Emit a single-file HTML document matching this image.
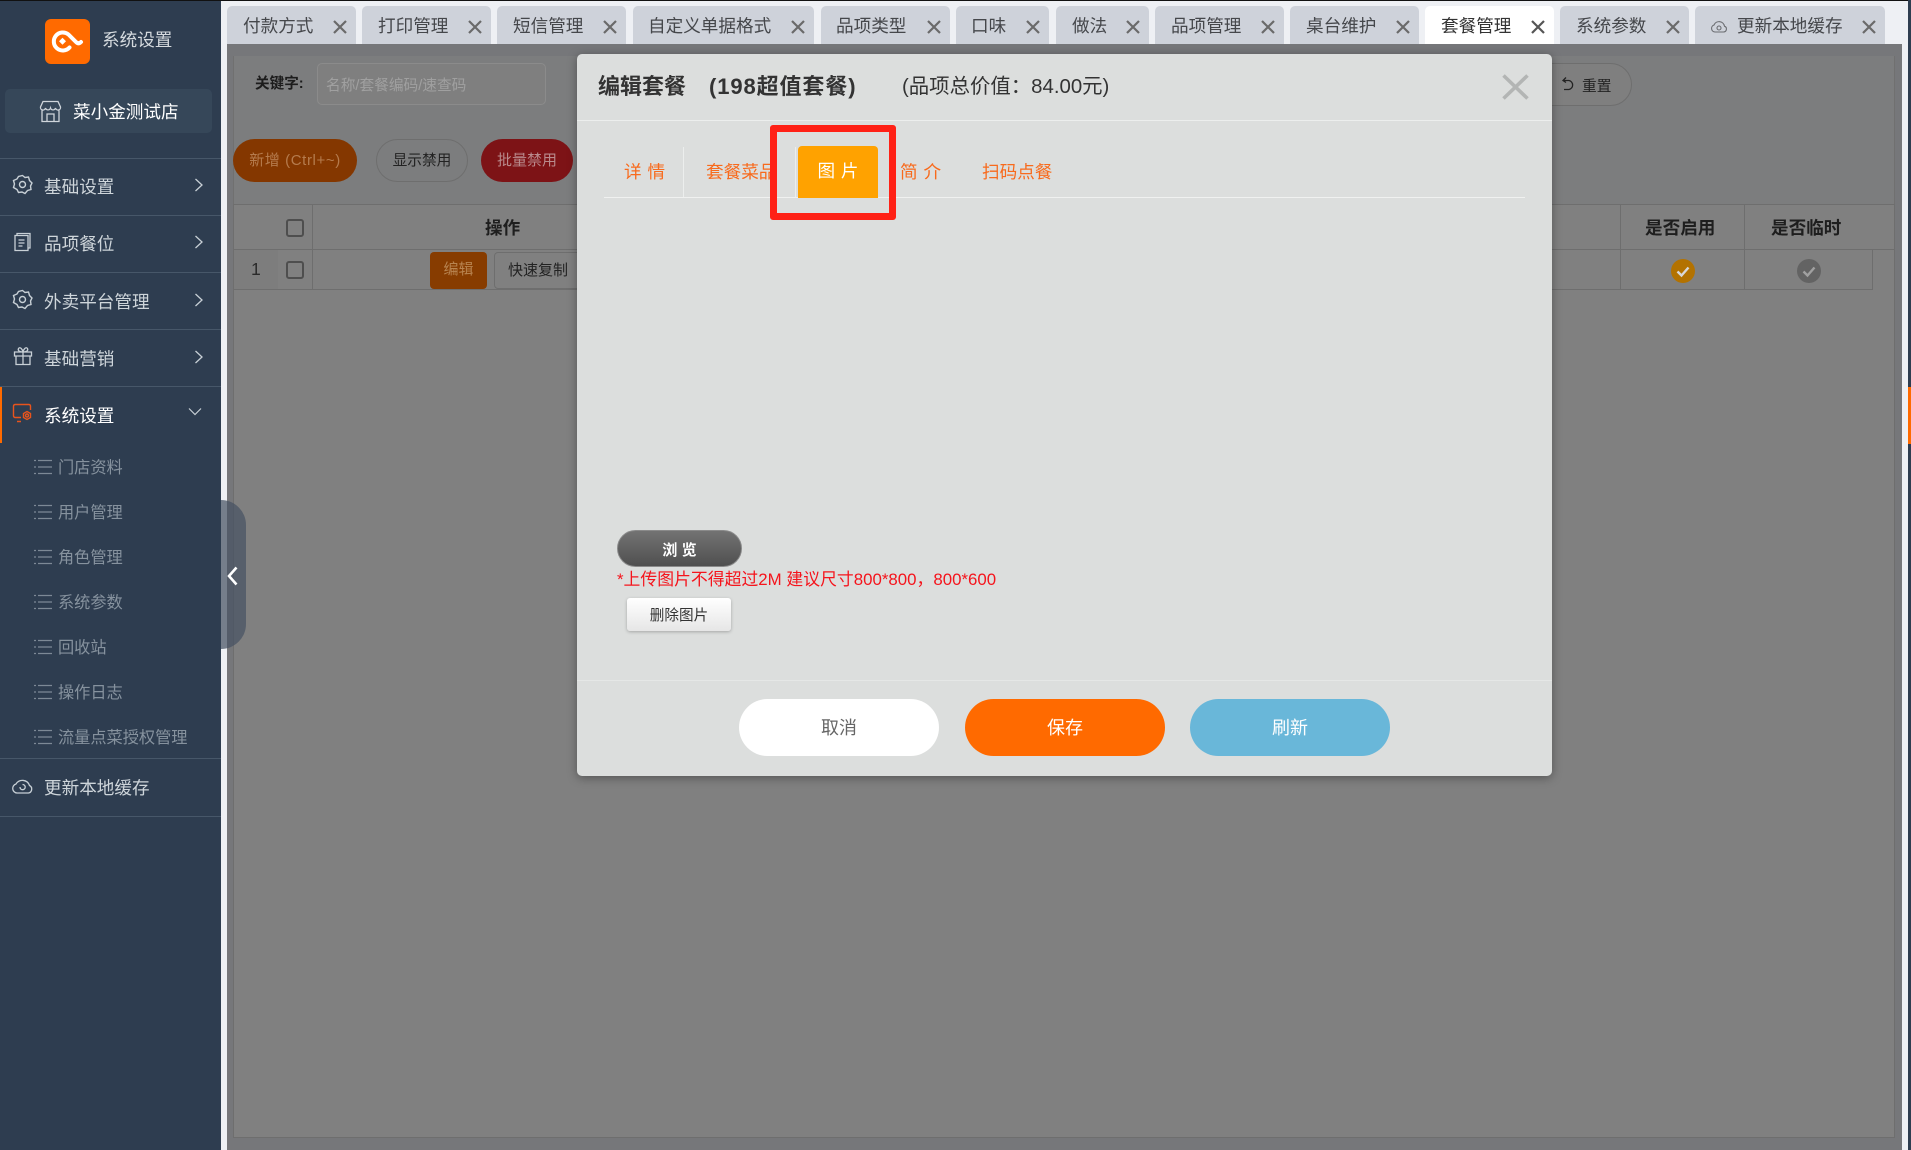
<!DOCTYPE html>
<html lang="zh"><head><meta charset="utf-8"><title>编辑套餐</title>
<style>
*{box-sizing:border-box;margin:0;padding:0}
html,body{width:1911px;height:1150px;overflow:hidden;background:#76777a;font-family:"Liberation Sans","Noto Sans CJK SC",sans-serif}
body{position:relative}
.a{position:absolute;white-space:nowrap}
.t{position:absolute;white-space:nowrap;line-height:30px;height:30px}
.tab{position:absolute;top:6px;height:38px;background:#ced2da;border-radius:5px 5px 0 0;font-size:17.6px;color:#45474b;line-height:40px;padding-left:16px;white-space:nowrap}
.tab svg.x{position:absolute;right:9px;top:14px}
.ln{position:absolute;left:0;width:221px;height:1px;background:#475769}
.m{position:absolute;left:44px;margin-top:1px;font-size:17.6px;color:#ced5da;line-height:30px;white-space:nowrap}
.s{position:absolute;left:58px;margin-top:1px;font-size:16.2px;color:#86929e;line-height:30px;white-space:nowrap}
.ic{position:absolute}
.pill{position:absolute;border-radius:22px;text-align:center;white-space:nowrap}
.mb{position:absolute;top:699px;width:200px;height:57px;border-radius:29px;text-align:center;line-height:58px;font-size:18px}
.ot{position:absolute;top:157px;font-size:17.6px;color:#f86a1c;line-height:30px;white-space:nowrap}
</style></head><body>

<!-- top line -->
<div class="a" style="left:0;top:0;width:1911px;height:1px;background:#111"></div>
<!-- light strip -->
<div class="a" style="left:221px;top:1px;width:1687px;height:1149px;background:#eef0f4"></div>
<div class="a" style="left:227px;top:44px;width:1675px;height:1106px;background:#76777a"></div>
<div class="a" style="left:1908px;top:0;width:3px;height:1150px;background:#2e3d50"></div>
<div class="a" style="left:1908px;top:387px;width:3px;height:57px;background:#ff6a00"></div>

<!-- tabs -->
<div class="tab" style="left:227px;width:129px">付款方式<svg class="x" width="14" height="14" viewBox="0 0 14 14"><path d="M1 1L13 13M13 1L1 13" stroke="#6a6a6a" stroke-width="2.2"/></svg></div>
<div class="tab" style="left:362px;width:129px">打印管理<svg class="x" width="14" height="14" viewBox="0 0 14 14"><path d="M1 1L13 13M13 1L1 13" stroke="#6a6a6a" stroke-width="2.2"/></svg></div>
<div class="tab" style="left:497px;width:129px">短信管理<svg class="x" width="14" height="14" viewBox="0 0 14 14"><path d="M1 1L13 13M13 1L1 13" stroke="#6a6a6a" stroke-width="2.2"/></svg></div>
<div class="tab" style="left:633px;width:181px;padding-left:15px">自定义单据格式<svg class="x" width="14" height="14" viewBox="0 0 14 14"><path d="M1 1L13 13M13 1L1 13" stroke="#6a6a6a" stroke-width="2.2"/></svg></div>
<div class="tab" style="left:821px;width:129px;padding-left:15px">品项类型<svg class="x" width="14" height="14" viewBox="0 0 14 14"><path d="M1 1L13 13M13 1L1 13" stroke="#6a6a6a" stroke-width="2.2"/></svg></div>
<div class="tab" style="left:956px;width:93px;padding-left:15px">口味<svg class="x" width="14" height="14" viewBox="0 0 14 14"><path d="M1 1L13 13M13 1L1 13" stroke="#6a6a6a" stroke-width="2.2"/></svg></div>
<div class="tab" style="left:1056px;width:93px">做法<svg class="x" width="14" height="14" viewBox="0 0 14 14"><path d="M1 1L13 13M13 1L1 13" stroke="#6a6a6a" stroke-width="2.2"/></svg></div>
<div class="tab" style="left:1155px;width:129px">品项管理<svg class="x" width="14" height="14" viewBox="0 0 14 14"><path d="M1 1L13 13M13 1L1 13" stroke="#6a6a6a" stroke-width="2.2"/></svg></div>
<div class="tab" style="left:1290px;width:129px">桌台维护<svg class="x" width="14" height="14" viewBox="0 0 14 14"><path d="M1 1L13 13M13 1L1 13" stroke="#6a6a6a" stroke-width="2.2"/></svg></div>
<div class="tab" style="left:1425px;width:129px;background:#fff;color:#333">套餐管理<svg class="x" width="14" height="14" viewBox="0 0 14 14"><path d="M1 1L13 13M13 1L1 13" stroke="#555" stroke-width="2.2"/></svg></div>
<div class="tab" style="left:1560px;width:129px">系统参数<svg class="x" width="14" height="14" viewBox="0 0 14 14"><path d="M1 1L13 13M13 1L1 13" stroke="#6a6a6a" stroke-width="2.2"/></svg></div>
<div class="tab" style="left:1695px;width:190px;padding-left:42px"><svg class="ic" style="left:15px;top:12px" width="18" height="16" viewBox="0 0 18 16" fill="none" stroke="#6a6c70" stroke-width="1.1"><path d="M5 14H13.5A3 3 0 0 0 14.5 8.2A5.5 5.5 0 0 0 4 7A3.6 3.6 0 0 0 5 14Z"/><circle cx="9" cy="10" r="2"/></svg>更新本地缓存<svg class="x" width="14" height="14" viewBox="0 0 14 14"><path d="M1 1L13 13M13 1L1 13" stroke="#6a6a6a" stroke-width="2.2"/></svg></div>

<!-- page content (dimmed) -->
<div class="a" style="left:233px;top:56px;width:1662px;height:1082px;background:#7c7d7e;border-bottom:1px solid #6e6e6e;border-left:1px solid #707070;border-right:1px solid #707070"></div>
<div class="a" style="left:233px;top:204px;width:1662px;height:934px;background:#808080;border:1px solid #6e6e6e"></div>

<div class="t" style="left:255px;top:69px;font-size:14.6px;font-weight:700;color:#1c1c1c">关键字:</div>
<div class="a" style="left:317px;top:63px;width:229px;height:42px;border:1px solid #8b8b8b;border-radius:5px;background:#7f7f7f"></div>
<div class="t" style="left:326px;top:71px;font-size:14.7px;color:#a0a0a0">名称/套餐编码/速查码</div>

<div class="pill" style="left:233px;top:139px;width:124px;height:43px;background:#843700;color:#b57b4d;font-size:15px;letter-spacing:.6px;line-height:44px">新增 (Ctrl+~)</div>
<div class="pill" style="left:376px;top:139px;width:92px;height:43px;border:1px solid #6e6e6e;color:#222;font-size:14.7px;line-height:43px">显示禁用</div>
<div class="pill" style="left:481px;top:139px;width:92px;height:43px;background:#7d1316;color:#b98a8c;font-size:15px;line-height:44px">批量禁用</div>
<div class="pill" style="left:1500px;top:63px;width:132px;height:43px;border:1px solid #6e6e6e;background:#7f7f7f"></div>
<svg class="ic" style="left:1561px;top:76px" width="15" height="16" viewBox="0 0 15 16" fill="none" stroke="#222" stroke-width="1.3"><path d="M5 1.5L2 4.5L5 6.5M2 4.5H8A4.6 4.6 0 0 1 8 13.5H3"/></svg>
<div class="t" style="left:1582px;top:72px;font-size:14.7px;color:#222">重置</div>

<!-- table -->
<div class="a" style="left:233px;top:204px;width:1662px;height:46px;border-bottom:1px solid #6e6e6e"></div>
<div class="a" style="left:233px;top:249px;width:1640px;height:41px;border-bottom:1px solid #6e6e6e;border-right:1px solid #6e6e6e"></div>
<div class="a" style="left:234px;top:250px;width:44px;height:39px;background:#7d7d7d"></div>
<div class="a" style="left:312px;top:204px;width:1px;height:86px;background:#6e6e6e"></div>
<div class="a" style="left:1620px;top:204px;width:1px;height:86px;background:#6e6e6e"></div>
<div class="a" style="left:1744px;top:204px;width:1px;height:86px;background:#6e6e6e"></div>
<div class="a" style="left:286px;top:219px;width:18px;height:18px;border:2px solid #4e4e4e;border-radius:3px"></div>
<div class="a" style="left:286px;top:261px;width:18px;height:18px;border:2px solid #4e4e4e;border-radius:3px"></div>
<div class="t" style="left:251px;top:254px;font-size:17.6px;color:#2a2a2a">1</div>
<div class="t" style="left:485px;top:213px;font-size:17.6px;font-weight:700;color:#1e1e1e">操作</div>
<div class="a" style="left:430px;top:252px;width:57px;height:37px;border-radius:4px;background:#873c00;color:#b88450;font-size:15px;text-align:center;line-height:36px">编辑</div>
<div class="a" style="left:494px;top:252px;width:88px;height:37px;border-radius:4px;border:1px solid #6e6e6e;color:#222;font-size:15px;text-align:center;line-height:35px">快速复制</div>
<div class="t" style="left:1645px;top:213px;font-size:17.6px;font-weight:700;color:#1e1e1e">是否启用</div>
<div class="t" style="left:1771px;top:213px;font-size:17.6px;font-weight:700;color:#1e1e1e">是否临时</div>
<svg class="ic" style="left:1671px;top:259px" width="24" height="24" viewBox="0 0 24 24"><circle cx="12" cy="12" r="12" fill="#b37200"/><path d="M6.5 12.5L10.5 16.5L17.5 8.5" fill="none" stroke="#d8d8d8" stroke-width="2.4"/></svg>
<svg class="ic" style="left:1797px;top:259px" width="24" height="24" viewBox="0 0 24 24"><circle cx="12" cy="12" r="12" fill="#636363"/><path d="M6.5 12.5L10.5 16.5L17.5 8.5" fill="none" stroke="#a0a0a0" stroke-width="2.4"/></svg>

<!-- sidebar -->
<div class="a" style="left:0;top:1px;width:221px;height:1149px;background:#2e3d50"></div>
<div class="a" style="left:45px;top:19px;width:45px;height:45px;border-radius:6px;background:#ff6a00"></div>
<svg class="ic" style="left:45px;top:19px" width="45" height="45" viewBox="0 0 45 45" fill="none" stroke="#fff"><path d="M24.5 28.5A9 9 0 1 1 23.5 15.5L31 23Q33.5 25.5 36 23" stroke-width="4" stroke-linecap="round" stroke-linejoin="round"/><path d="M17.5 18.8L21 22.3L17.5 25.8L14 22.3Z" fill="#fff" stroke="none"/></svg>
<div class="t" style="left:102px;top:25px;font-size:17.6px;color:#d5dade">系统设置</div>
<div class="a" style="left:5px;top:89px;width:207px;height:44px;background:#364759;border-radius:5px"></div>
<svg class="ic" style="left:39px;top:100px" width="23" height="23" viewBox="0 0 23 23" fill="none" stroke="#cfd5db" stroke-width="1.3"><path d="M4 1.5H19L21.5 7A2.5 2.5 0 0 1 16.5 8A2.6 2.6 0 0 1 11.5 8A2.6 2.6 0 0 1 6.5 8A2.5 2.5 0 0 1 1.5 7ZM3 10V21.5H20V10M8 21.5V14H15V21.5"/></svg>
<div class="t" style="left:73px;top:97px;font-size:17.6px;color:#fff">菜小金测试店</div>

<div class="ln" style="top:158px"></div>
<div class="ln" style="top:215px"></div>
<div class="ln" style="top:272px"></div>
<div class="ln" style="top:329px"></div>
<div class="ln" style="top:386px"></div>
<div class="ln" style="top:758px"></div>
<div class="ln" style="top:816px"></div>

<svg class="ic" style="left:12px;top:174px" width="21" height="21" viewBox="0 0 21 21" fill="none" stroke="#c8d0d6" stroke-width="1.4"><path d="M10.5 1.5L13 3.5L16.5 3L17.5 6.5L20 9L18.5 12L19 15.5L15.5 16.5L13 19.5L10 18L6.5 18.5L5 15.5L1.5 13.5L2.5 10L1.5 6.5L5 5L6.5 2.5Z"/><circle cx="10.5" cy="10.5" r="3"/></svg>
<div class="m" style="left:44px;top:171px">基础设置</div>
<svg class="ic" style="left:194px;top:178px" width="10" height="14" viewBox="0 0 10 14" fill="none" stroke="#c8d0d6" stroke-width="1.3"><path d="M1.5 1L8 7L1.5 13"/></svg>

<svg class="ic" style="left:13px;top:232px" width="20" height="20" viewBox="0 0 20 20" fill="none" stroke="#c8d0d6" stroke-width="1.3"><path d="M4 3V1.5H17V16H15M2 3.5H15V18.5H2ZM5.5 8H11.5M5.5 11H11.5M5.5 14H9.5"/></svg>
<div class="m" style="left:44px;top:228px">品项餐位</div>
<svg class="ic" style="left:194px;top:235px" width="10" height="14" viewBox="0 0 10 14" fill="none" stroke="#c8d0d6" stroke-width="1.3"><path d="M1.5 1L8 7L1.5 13"/></svg>

<svg class="ic" style="left:12px;top:289px" width="21" height="21" viewBox="0 0 21 21" fill="none" stroke="#c8d0d6" stroke-width="1.4"><path d="M10.5 1.5L13 3.5L16.5 3L17.5 6.5L20 9L18.5 12L19 15.5L15.5 16.5L13 19.5L10 18L6.5 18.5L5 15.5L1.5 13.5L2.5 10L1.5 6.5L5 5L6.5 2.5Z"/><circle cx="10.5" cy="10.5" r="3"/></svg>
<div class="m" style="left:44px;top:286px">外卖平台管理</div>
<svg class="ic" style="left:194px;top:293px" width="10" height="14" viewBox="0 0 10 14" fill="none" stroke="#c8d0d6" stroke-width="1.3"><path d="M1.5 1L8 7L1.5 13"/></svg>

<svg class="ic" style="left:13px;top:346px" width="20" height="20" viewBox="0 0 20 20" fill="none" stroke="#c8d0d6" stroke-width="1.3"><path d="M1.5 6H18.5V10H1.5ZM3 10V18.5H17V10M10 6V18.5M10 6C7 6 4.5 5 5.5 2.5C7 0.5 9.5 3 10 6C10.5 3 13 0.5 14.5 2.5C15.5 5 13 6 10 6"/></svg>
<div class="m" style="left:44px;top:343px">基础营销</div>
<svg class="ic" style="left:194px;top:350px" width="10" height="14" viewBox="0 0 10 14" fill="none" stroke="#c8d0d6" stroke-width="1.3"><path d="M1.5 1L8 7L1.5 13"/></svg>

<div class="a" style="left:0;top:387px;width:2px;height:56px;background:#ff6a00"></div>
<svg class="ic" style="left:12px;top:403px" width="22" height="21" viewBox="0 0 22 21" fill="none" stroke="#e8541c" stroke-width="1.4"><path d="M9 14.5H3A1.8 1.8 0 0 1 1.5 13V3A1.8 1.8 0 0 1 3 1.5H17A1.8 1.8 0 0 1 18.5 3V7M5 18.5H9"/><path d="M15 8.5L18.5 10.5V14.5L15 16.5L11.5 14.5V10.5Z"/><circle cx="15" cy="12.5" r="1.5"/></svg>
<div class="m" style="left:44px;top:400px;color:#fff">系统设置</div>
<svg class="ic" style="left:188px;top:407px" width="14" height="10" viewBox="0 0 14 10" fill="none" stroke="#c8d0d6" stroke-width="1.2"><path d="M1 1.5L7 7.5L13 1.5"/></svg>

<svg class="ic" style="left:34px;top:459px" width="18" height="16" viewBox="0 0 18 16" fill="none" stroke="#7d8996" stroke-width="1.3"><path d="M0 1.5H2M4 1.5H18M0 8H2M4 8H18M0 14.5H2M4 14.5H18"/></svg>
<div class="s" style="top:452px">门店资料</div>
<svg class="ic" style="left:34px;top:504px" width="18" height="16" viewBox="0 0 18 16" fill="none" stroke="#7d8996" stroke-width="1.3"><path d="M0 1.5H2M4 1.5H18M0 8H2M4 8H18M0 14.5H2M4 14.5H18"/></svg>
<div class="s" style="top:497px">用户管理</div>
<svg class="ic" style="left:34px;top:549px" width="18" height="16" viewBox="0 0 18 16" fill="none" stroke="#7d8996" stroke-width="1.3"><path d="M0 1.5H2M4 1.5H18M0 8H2M4 8H18M0 14.5H2M4 14.5H18"/></svg>
<div class="s" style="top:542px">角色管理</div>
<svg class="ic" style="left:34px;top:594px" width="18" height="16" viewBox="0 0 18 16" fill="none" stroke="#7d8996" stroke-width="1.3"><path d="M0 1.5H2M4 1.5H18M0 8H2M4 8H18M0 14.5H2M4 14.5H18"/></svg>
<div class="s" style="top:587px">系统参数</div>
<svg class="ic" style="left:34px;top:639px" width="18" height="16" viewBox="0 0 18 16" fill="none" stroke="#7d8996" stroke-width="1.3"><path d="M0 1.5H2M4 1.5H18M0 8H2M4 8H18M0 14.5H2M4 14.5H18"/></svg>
<div class="s" style="top:632px">回收站</div>
<svg class="ic" style="left:34px;top:684px" width="18" height="16" viewBox="0 0 18 16" fill="none" stroke="#7d8996" stroke-width="1.3"><path d="M0 1.5H2M4 1.5H18M0 8H2M4 8H18M0 14.5H2M4 14.5H18"/></svg>
<div class="s" style="top:677px">操作日志</div>
<svg class="ic" style="left:34px;top:729px" width="18" height="16" viewBox="0 0 18 16" fill="none" stroke="#7d8996" stroke-width="1.3"><path d="M0 1.5H2M4 1.5H18M0 8H2M4 8H18M0 14.5H2M4 14.5H18"/></svg>
<div class="s" style="top:722px">流量点菜授权管理</div>

<svg class="ic" style="left:11px;top:776px" width="23" height="19" viewBox="0 0 23 19" fill="none" stroke="#c8d0d6" stroke-width="1.3"><path d="M6 17H17.5A4 4 0 0 0 18.5 9.5A7.5 7.5 0 0 0 5 8A4.6 4.6 0 0 0 6 17Z"/><path d="M9 11A2.6 2.6 0 1 0 11.5 8.5"/></svg>
<div class="m" style="left:44px;top:772px">更新本地缓存</div>

<!-- collapse handle -->
<div class="a" style="left:221px;top:500px;width:25px;height:149px;background:rgba(70,82,98,.72);border-radius:0 25px 25px 0"></div>
<svg class="ic" style="left:227px;top:565px" width="12" height="22" viewBox="0 0 12 22" fill="none" stroke="#fff" stroke-width="2.6"><path d="M9.5 2.5L2 11L9.5 19.5"/></svg>

<!-- modal -->
<div class="a" style="left:577px;top:54px;width:975px;height:722px;background:#dcdedd;border-radius:5px;box-shadow:0 2px 10px rgba(0,0,0,.35)"></div>
<div class="t" style="left:598px;top:72px;font-size:22px;font-weight:700;color:#333">编辑套餐</div>
<div class="t" style="left:709px;top:72px;font-size:22px;font-weight:700;letter-spacing:.9px;color:#333">(198超值套餐)</div>
<div class="t" style="left:902px;top:72px;font-size:20.4px;color:#333">(品项总价值：84.00元)</div>
<svg class="ic" style="left:1502px;top:74px" width="27" height="26" viewBox="0 0 27 26" fill="none" stroke="#b3b5b4" stroke-width="3.6"><path d="M1.5 1.5L25.5 24.5M25.5 1.5L1.5 24.5"/></svg>
<div class="a" style="left:577px;top:120px;width:975px;height:1px;background:#eceeed"></div>
<div class="a" style="left:604px;top:197px;width:921px;height:1px;background:#f0f1f0"></div>
<div class="a" style="left:683px;top:147px;width:1px;height:50px;background:#eceeed"></div>
<div class="a" style="left:795px;top:147px;width:1px;height:50px;background:#eceeed"></div>
<div class="ot" style="left:624px;word-spacing:1px">详 情</div>
<div class="ot" style="left:706px">套餐菜品</div>
<div class="a" style="left:798px;top:146px;width:80px;height:52px;background:#ffa200;border-radius:4px 4px 0 0;color:#fff;font-size:17.6px;word-spacing:1px;text-align:center;line-height:50px">图 片</div>
<div class="a" style="left:770px;top:125px;width:126px;height:95px;border:7px solid #ff2116;border-radius:3px"></div>
<div class="ot" style="left:900px;word-spacing:1px">简 介</div>
<div class="ot" style="left:982px">扫码点餐</div>

<div class="a" style="left:617px;top:530px;width:125px;height:37px;border-radius:19px;background:linear-gradient(#737373,#4f4f4f);border:1px solid #8a8a8a;color:#fff;font-size:15px;font-weight:700;text-align:center;line-height:39px">浏 览</div>
<div class="t" style="left:617px;top:565px;font-size:16.85px;color:#f5141c">*上传图片不得超过2M 建议尺寸800*800，800*600</div>
<div class="a" style="left:627px;top:598px;width:104px;height:33px;border-radius:3px;background:linear-gradient(#fff,#e6e6e6);box-shadow:0 1px 3px rgba(0,0,0,.25);color:#333;font-size:14.6px;text-align:center;line-height:36px">删除图片</div>

<div class="a" style="left:577px;top:680px;width:975px;height:1px;background:#e5e7e6"></div>
<div class="mb" style="left:739px;background:#fff;color:#666">取消</div>
<div class="mb" style="left:965px;background:#ff6a00;color:#fff">保存</div>
<div class="mb" style="left:1190px;background:#69b7d9;color:#fff">刷新</div>

</body></html>
